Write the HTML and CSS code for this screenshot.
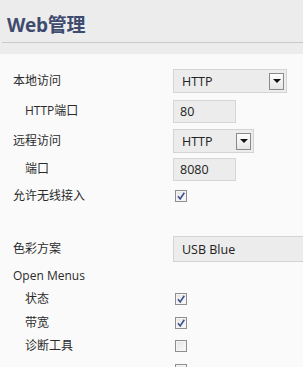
FILE: index.html
```html
<!DOCTYPE html>
<html lang="zh-CN">
<head>
<meta charset="UTF-8">
<title>Web管理</title>
<link rel="stylesheet" href="styles.css">
</head>
<body>
<header class="top">
  <h1 class="title">Web管理</h1>
</header>

<section class="form">
  <div class="row tall">
    <span class="label">本地访问</span>
    <div class="select w1"><span>HTTP</span><i class="arrow"></i></div>
  </div>
  <div class="row tall">
    <span class="label sub">HTTP端口</span>
    <div class="input">80</div>
  </div>
  <div class="row tall">
    <span class="label">远程访问</span>
    <div class="select w2"><span>HTTP</span><i class="arrow"></i></div>
  </div>
  <div class="row mid">
    <span class="label sub">端口</span>
    <div class="input">8080</div>
  </div>
  <div class="row mid">
    <span class="label">允许无线接入</span>
    <span class="check on"><svg viewBox="0 0 10 10"><path d="M2 5.2 L4.2 8 L8.3 1.8"/></svg></span>
  </div>

  <div class="row tall gap">
    <span class="label">色彩方案</span>
    <div class="select w3"><span>USB Blue</span></div>
  </div>
  <div class="row">
    <span class="label">Open Menus</span>
  </div>
  <div class="row">
    <span class="label sub">状态</span>
    <span class="check on"><svg viewBox="0 0 10 10"><path d="M2 5.2 L4.2 8 L8.3 1.8"/></svg></span>
  </div>
  <div class="row">
    <span class="label sub">带宽</span>
    <span class="check on"><svg viewBox="0 0 10 10"><path d="M2 5.2 L4.2 8 L8.3 1.8"/></svg></span>
  </div>
  <div class="row">
    <span class="label sub">诊断工具</span>
    <span class="check"></span>
  </div>
  <div class="row">
    <span class="label sub"></span>
    <span class="check"></span>
  </div>
</section>
</body>
</html>
```

FILE: styles.css
```css
*{box-sizing:border-box;margin:0;padding:0;}
html,body{height:100%;overflow:hidden;}
body{background:#fafafa;color:#2b2b2b;font-family:"Open Sans","Noto Sans CJK SC",sans-serif;font-size:12px;}
.top{background:#ececec;padding:0 0 11px 2px;}
.title{height:43px;padding:14px 0 0 5px;border-bottom:1px solid #c9c9c9;font-size:19px;font-weight:700;color:#3e4b6f;line-height:22px;letter-spacing:-.3px;}
.form{padding-top:12px;}
.row{display:flex;align-items:center;height:23.5px;padding-left:13px;}
.row.tall{height:30px;}
.row.mid{height:26.5px;}
.row.gap{margin-top:25px;}
.label{width:160px;flex:none;line-height:16px;}
.label.sub{padding-left:12px;}
.select{flex:none;display:flex;align-items:center;justify-content:space-between;height:24px;background:#ececec;border:1px solid #d4d4d4;padding:0 2px 0 8px;font-size:12.5px;color:#222;}
.select.w1{width:114px;}
.select.w2{width:81px;}
.select.w3{flex:1;height:26px;border-right:none;}
.arrow{width:15px;height:17px;border:1px solid #8a8a8a;background:linear-gradient(#fdfdfd,#e6e6e6);display:flex;align-items:center;justify-content:center;}
.arrow::after{content:"";border-left:4px solid transparent;border-right:4px solid transparent;border-top:4px solid #111;}
.input{flex:none;width:63px;height:23px;background:#ececec;border:1px solid #d6d6d6;padding:0 0 0 6px;line-height:21px;font-size:12.5px;color:#222;}
.check{flex:none;width:12px;height:12px;margin-left:2px;border:1px solid #8f8f8f;background:linear-gradient(135deg,#e4e4e4,#fbfbfb);box-shadow:inset 0 0 0 1px #f4f4f4;display:flex;align-items:center;justify-content:center;}
.check svg{width:10px;height:10px;}
.check path{fill:none;stroke:#3d4f8f;stroke-width:1.6;}
```
